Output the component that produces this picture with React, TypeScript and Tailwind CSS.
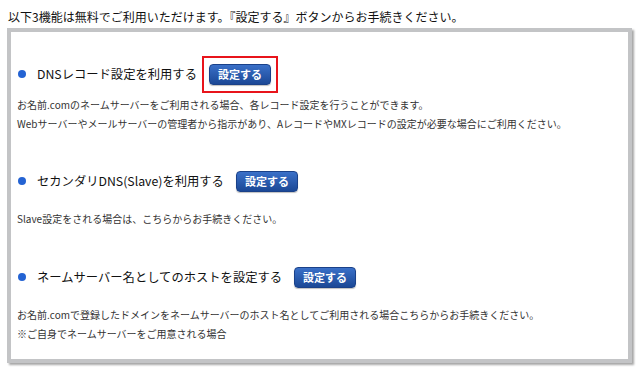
import React from "react";

function SetButton({ highlight = false }: { highlight?: boolean }) {
  return (
    <div className="relative">
      <div className="flex items-center justify-center w-[62px] h-[21px] rounded-[4px] bg-gradient-to-b from-[#3a70c8] to-[#1b4896] border border-[#1a4189] text-white text-[11px] font-bold leading-none shadow-[0_1px_1px_rgba(0,0,0,0.25)]">
        設定する
      </div>
      {highlight && (
        <div className="absolute left-[-7px] top-[-8px] w-[76px] h-[37px] border-2 border-[#e8141b]" />
      )}
    </div>
  );
}

function Heading({ title, highlight = false }: { title: string; highlight?: boolean }) {
  return (
    <div className="flex items-center h-[22px]">
      <div className="ml-[7px] w-[8px] h-[8px] rounded-full bg-[#2463d3]" />
      <div className="ml-[11px] text-[12.3px] leading-[18px] text-[#111]">{title}</div>
      <div className="ml-[12px]">
        <SetButton highlight={highlight} />
      </div>
    </div>
  );
}

export default function App() {
  return (
    <div
      className="w-[640px] h-[378px] bg-white overflow-hidden"
      style={{ fontFamily: '"Noto Sans CJK JP", "Noto Sans", sans-serif' }}
    >
      <p className="pl-[8px] pt-[8px] text-[12px] leading-[18px] text-[#111]">
        以下3機能は無料でご利用いただけます。『設定する』ボタンからお手続きください。
      </p>
      <div className="ml-[7px] mt-[2px] w-[625px] h-[335px] border-4 border-[#c3c4c6] bg-white shadow-[2px_2px_2px_rgba(0,0,0,0.35)] flex flex-col pt-[31px]">
        <Heading title="DNSレコード設定を利用する" highlight />
        <div className="pl-[6px] mt-[10px] text-[10px] leading-[19px] text-[#333]">
          <p>お名前.comのネームサーバーをご利用される場合、各レコード設定を行うことができます。</p>
          <p>Webサーバーやメールサーバーの管理者から指示があり、AレコードやMXレコードの設定が必要な場合にご利用ください。</p>
        </div>
        <div className="mt-[37px]">
          <Heading title="セカンダリDNS(Slave)を利用する" />
        </div>
        <div className="pl-[6px] mt-[17px] text-[10px] leading-[19px] text-[#333]">
          <p>Slave設定をされる場合は、こちらからお手続きください。</p>
        </div>
        <div className="mt-[38px]">
          <Heading title="ネームサーバー名としてのホストを設定する" />
        </div>
        <div className="pl-[6px] mt-[17px] text-[10px] leading-[19px] text-[#333]">
          <p>お名前.comで登録したドメインをネームサーバーのホスト名としてご利用される場合こちらからお手続きください。</p>
          <p>※ご自身でネームサーバーをご用意される場合</p>
        </div>
      </div>
    </div>
  );
}
